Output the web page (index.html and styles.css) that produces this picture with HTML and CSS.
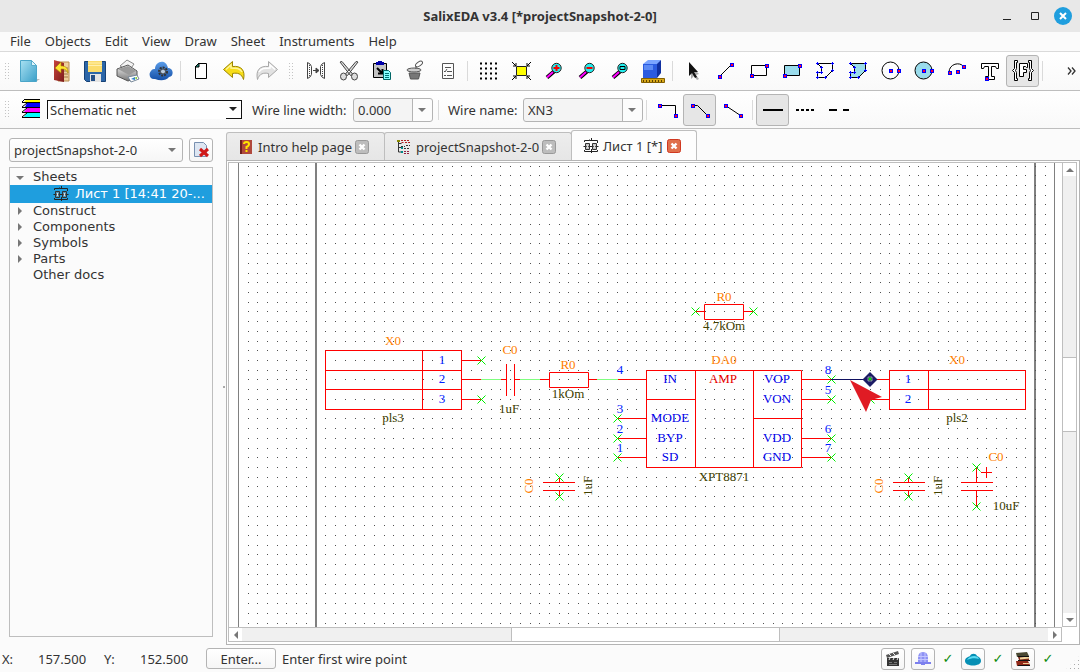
FILE: index.html
```html
<!DOCTYPE html>
<html lang="en">

<head>
  <meta charset="utf-8">
  <title>SalixEDA v3.4 [*projectSnapshot-2-0]</title>
  <meta name="viewport" content="width=device-width, initial-scale=1">
  <link rel="stylesheet" href="styles.css">
</head>

<body>
  <!-- shared icons -->
  <svg class="defs" aria-hidden="true">
    <defs>
      <linearGradient id="g-page" x1="0" y1="0" x2="1" y2="1"><stop offset="0" stop-color="#a9e1f2"/><stop offset="1" stop-color="#3a9fc8"/></linearGradient>
      <linearGradient id="g-book" x1="0" y1="0" x2="1" y2="1"><stop offset="0" stop-color="#c8443c"/><stop offset="1" stop-color="#7c1c1c"/></linearGradient>
      <linearGradient id="g-gray" x1="0" y1="0" x2="0" y2="1"><stop offset="0" stop-color="#f2f2f2"/><stop offset="1" stop-color="#777"/></linearGradient>
      <linearGradient id="g-blue" x1="0" y1="0" x2="0" y2="1"><stop offset="0" stop-color="#5a9ce8"/><stop offset="1" stop-color="#1550a8"/></linearGradient>
      <symbol id="i-sheet" viewBox="0 0 16 16">
        <path d="M1.500 4V2.500h5v-1M6.500 2.500h8V5M8.500 0v3M1.500 12v1.500h13V12M.5 8.500h15M8.500 11v4" fill="none" stroke="#222"/>
        <path d="M2.500 5.500h4v6h-4zM9.500 5.500h4v6h-4z" fill="#8a8a8a" fill-opacity=".5" stroke="#333"/>
        <path d="M4.500 7v3M11.500 7v3" stroke="#ddd"/>
      </symbol>
      <symbol id="i-close" viewBox="0 0 14 14">
        <rect x=".5" y=".5" width="13" height="13" rx="2" class="close-box"/>
        <path d="M4.500 4.500l5 5M9.500 4.500l-5 5" stroke="#fff" stroke-width="2.400"/>
      </symbol>
      <symbol id="x" viewBox="-5 -5 10 10" overflow="visible">
        <path d="M-4-4l8 8M4-4l-8 8" stroke="#0e0" fill="none"/>
      </symbol>
    </defs>
  </svg>

  <header class="titlebar">
    <h1>SalixEDA v3.4 [*projectSnapshot-2-0]</h1>
    <div class="window-buttons">
      <button type="button" aria-label="Minimize"><svg width="10" height="10"><path d="M1 8.500h8" stroke="#222"/></svg></button>
      <button type="button" aria-label="Maximize"><svg width="10" height="10"><path d="M1.500 1.500h7v7h-7z" fill="none" stroke="#222"/></svg></button>
      <button type="button" class="quit" aria-label="Close"><svg width="18" height="18"><path d="M6 6l6 6M12 6l-6 6" stroke="#fff" stroke-width="2"/></svg></button>
    </div>
  </header>

  <nav class="menubar">
    <a href="#">File</a>
    <a href="#">Objects</a>
    <a href="#">Edit</a>
    <a href="#">View</a>
    <a href="#">Draw</a>
    <a href="#">Sheet</a>
    <a href="#">Instruments</a>
    <a href="#">Help</a>
  </nav>

  <div class="toolbar" role="toolbar" aria-label="Main">
    <span class="grip"></span>
    <button type="button" class="tool" aria-label="New"><svg width="24" height="24"><path d="M6 20h17l-3 2H6z" fill="#bbb"/><path d="M3.500 1.500h11l5 5v16h-16z" fill="url(#g-page)" stroke="#4aa5c8"/><path d="M14.500 1.500v5h5z" fill="#dff4fb" stroke="#58adcc"/></svg></button>
    <button type="button" class="tool" aria-label="Open"><svg width="24" height="24"><path d="M8 3h11v19H8z" fill="#edcf9c" stroke="#b98d50"/><path d="M13 9h5M13 12h5M13 15h5M13 18h5" stroke="#a07848"/><path d="M4 1l10 3v19l-10-2z" fill="url(#g-book)"/><path d="M5 9l6-6v4c5 0 7 2 7 7-2-4-4-4-7-4v4z" fill="#ffe632" stroke="#a88800" stroke-width=".6"/></svg></button>
    <button type="button" class="tool" aria-label="Save"><svg width="24" height="24"><path d="M1.500 2.500h21v20H3.500l-2-2z" fill="#2c66a8" stroke="#174276"/><path d="M5 2h14v11H5z" fill="#fbdc6c"/><path d="M5 4h14M5 6.500h14" stroke="#fff0b0"/><path d="M7 15h11v8H7z" fill="#e4e4e4"/><path d="M8 16h4v6H8z" fill="#244f86"/></svg></button>
    <button type="button" class="tool" aria-label="Print"><svg width="24" height="24"><path d="M4 7l7-6 7 4-5 7z" fill="#f4f4f4" stroke="#888"/><path d="M1 10l11-4 9 6v7l-9 3L1 17z" fill="url(#g-gray)" stroke="#555"/><path d="M2 10l10-3 8 5-7 4z" fill="#9a9a9a"/><path d="M12 18l9-2 2 4-8 3z" fill="#fff" stroke="#789"/><path d="M15 20l4-2v3z" fill="#2a7dd0"/><path d="M18 19l3-1v2z" fill="#7ac820"/></svg></button>
    <button type="button" class="tool" aria-label="Cloud"><svg width="24" height="24"><path d="M6 20C1 21-1 15 2 12c1-2 3-2 4-2 0-8 11-11 13-1 6 0 6 9 1 9-3 4-9 4-14 2z" fill="url(#g-blue)"/><circle cx="14" cy="12.500" r="4" fill="none" stroke="#333" stroke-width="2" stroke-dasharray="2 1"/><circle cx="14" cy="12.500" r="2.500" fill="#b8cbe0" stroke="#444"/></svg></button>
    <span class="sep"></span>
    <button type="button" class="tool" aria-label="New sheet"><svg width="24" height="24"><path d="M9.500 4.500h8v15h-11v-12z" fill="#fff" stroke="#000"/><path d="M6 8l4-4v4z" fill="#1a8a7a" stroke="#000"/></svg></button>
    <button type="button" class="tool" aria-label="Undo"><svg width="24" height="24"><path d="M1.500 10.500l9-8v5c9-1 13 4 11 13-2-6-6-7-11-6v4z" fill="#f7dd18" stroke="#9b8500"/><path d="M4 10.500l5-4.500v3c5 0 9 0 11 4" fill="none" stroke="#fff59a" stroke-width="1.500"/></svg></button>
    <button type="button" class="tool" aria-label="Redo"><svg width="24" height="24"><path d="M22.500 10.500l-9-8v5c-9-1-13 4-11 13 2-6 6-7 11-6v4z" fill="#e2e2e2" stroke="#a8a8a8"/><path d="M20 10.500l-5-4.500v3c-5 0-9 0-11 4" fill="none" stroke="#fff" stroke-width="1.500"/></svg></button>
    <span class="grip"></span>
    <button type="button" class="tool" aria-label="Join"><svg width="24" height="24" fill="none" stroke="#444"><path d="M3.500 3.500q3 1 4 4v8q-1 3-4 4zM20.500 3.500q-3 1-4 4v8q1 3 4 4z"/><path d="M9 11.500h5M12 9v5l3-2.500z" fill="#444"/><path d="M5.500 6v12M18.500 6v12" stroke-dasharray="1 1"/></svg></button>
    <button type="button" class="tool" aria-label="Cut"><svg width="24" height="24" fill="#ddd" stroke="#444"><path d="M3 3l2-.5 11 13-2.500 1zM21 3l-2-.5-11 13 2.500 1z"/><ellipse cx="6.500" cy="17.500" rx="3" ry="3.500"/><ellipse cx="17.500" cy="17.500" rx="3" ry="3.500"/></svg></button>
    <button type="button" class="tool" aria-label="Paste"><svg width="24" height="24"><path d="M3.500 4.500h13v14h-13z" fill="#c4c4c4" stroke="#000"/><path d="M6 3h2V2h4v1h2v3H6z" fill="#00a"/><path d="M7 9l5 5M12.500 10v4.500H8" fill="none" stroke="#000" stroke-width="2"/><path d="M13.500 11.500h5l2 2v7h-7z" fill="#8ff" stroke="#066"/><path d="M15 14.500h4M15 16.500h4M15 18.500h4" stroke="#077"/></svg></button>
    <button type="button" class="tool" aria-label="Delete"><svg width="24" height="24" stroke="#555"><ellipse cx="11" cy="11" rx="7" ry="2" fill="#ccc"/><path d="M6 14h11l-1.500 6h-8z" fill="#777"/><ellipse cx="16" cy="5" rx="4" ry="2" fill="#fff" transform="rotate(-35 16 5)"/><path d="M13 7v3"/></svg></button>
    <button type="button" class="tool" aria-label="Properties"><svg width="24" height="24" fill="none" stroke="#555"><path d="M6.500 4.500h11v15h-11zM9 8.500h6M11 12.500h5M11 16.500h5M8 12l1 1 2-3M8 16.500h2"/></svg></button>
    <span class="sep"></span>
    <button type="button" class="tool" aria-label="Grid"><svg width="24" height="24"><path d="M4 4.500h17M4 9.500h17M4 14.500h17M4 19.500h17" stroke="#000" stroke-width="2" stroke-dasharray="2 3"/></svg></button>
    <button type="button" class="tool" aria-label="Fit"><svg width="24" height="24"><path d="M7.500 7.500h10v9h-10z" fill="#ff0" stroke="#222"/><path d="M3 3l4 4M22 3l-4 4M3 21l4-4M22 21l-4-4M7 4v3H4M18 4v3h3M7 20v-3H4M18 20v-3h3" fill="none" stroke="#000"/></svg></button>
    <button type="button" class="tool" aria-label="Zoom in"><svg width="24" height="24"><path d="M5 18.500l7-6" stroke="#000" stroke-width="4"/><path d="M5 18.500l6-5.500" stroke="#f0f" stroke-width="2"/><circle cx="14.500" cy="9" r="4.700" fill="#2ee" stroke="#222"/><path d="M11.500 9h6M14.500 6v6" stroke="#f20000" stroke-width="2"/></svg></button>
    <button type="button" class="tool" aria-label="Zoom out"><svg width="24" height="24"><path d="M5 18.500l7-6" stroke="#000" stroke-width="4"/><path d="M5 18.500l6-5.500" stroke="#f0f" stroke-width="2"/><circle cx="14.500" cy="9" r="4.700" fill="#2ee" stroke="#222"/><path d="M11.500 9h6" stroke="#f20000" stroke-width="2"/></svg></button>
    <button type="button" class="tool" aria-label="Zoom window"><svg width="24" height="24"><path d="M5 18.500l7-6" stroke="#000" stroke-width="4"/><path d="M5 18.500l6-5.500" stroke="#f0f" stroke-width="2"/><circle cx="14.500" cy="9" r="4.700" fill="#2ee" stroke="#222"/><path d="M12 7.500h5v3h-5z" fill="none" stroke="#000"/></svg></button>
    <button type="button" class="tool" aria-label="3D view"><svg width="24" height="24"><path d="M2 5l5-4h13l-3 4z" fill="#7aa4ff"/><path d="M2 5h14v14H2z" fill="#2b5be0"/><path d="M3 6h9v5H3z" fill="#5c8af4"/><path d="M16 5l4-4v13l-4 5z" fill="#1030a0"/><path d="M.5 19.500h23v4H.5z" fill="#d8a818" stroke="#846000"/><path d="M2.500 21v2M5.500 21v2M8.500 21v2M11.500 21v2M14.500 21v2M17.500 21v2M20.500 21v2" stroke="#5c4200"/></svg></button>
    <span class="sep"></span>
    <button type="button" class="tool" aria-label="Select"><svg width="24" height="24"><path d="M10 7l8 8-3 1 3 4-2 1-3-4-3 3z" fill="#aaa"/><path d="M8 3l9 10h-4l3 5-2 1-3-5-3 3z" fill="#111"/></svg></button>
    <button type="button" class="tool" aria-label="Line"><svg width="24" height="24"><path d="M5.500 17.500l12-12" stroke="#000"/><path d="M4 16h3v3H4zM16 4h3v3h-3z" class="node"/></svg></button>
    <button type="button" class="tool" aria-label="Rectangle"><svg width="24" height="24"><path d="M4.500 6.500h15v10h-15z" fill="none" stroke="#000"/><path d="M3 15h3v3H3zM18 5h3v3h-3z" class="node"/></svg></button>
    <button type="button" class="tool" aria-label="Filled rectangle"><svg width="24" height="24"><path d="M4.500 6.500h15v10h-15z" fill="#9adcec" stroke="#000"/><path d="M3 15h3v3H3zM18 5h3v3h-3z" class="node"/></svg></button>
    <button type="button" class="tool" aria-label="Polygon"><svg width="24" height="24"><path d="M4.500 4.500h15v7l-7 7h-8v-5h4v-5z" fill="none" stroke="#000"/><path d="M3 4.500h3M18 4.500h3M18 11.500h3M11 18.500h3M3 18.500h3M3 13.500h3M7 13.500h3M7 8.500h3M4.500 3v3M19.500 3v3M19.500 10v3M12.500 17v3M4.500 17v3M4.500 12v3M8.500 12v3M8.500 7v3" class="vertex"/></svg></button>
    <button type="button" class="tool" aria-label="Filled polygon"><svg width="24" height="24"><path d="M4.500 4.500h15v7l-7 7h-8v-5h4v-5z" fill="#9adcec" stroke="#000"/><path d="M3 4.500h3M18 4.500h3M18 11.500h3M11 18.500h3M3 18.500h3M3 13.500h3M7 13.500h3M7 8.500h3M4.500 3v3M19.500 3v3M19.500 10v3M12.500 17v3M4.500 17v3M4.500 12v3M8.500 12v3M8.500 7v3" class="vertex"/></svg></button>
    <button type="button" class="tool" aria-label="Circle"><svg width="24" height="24"><circle cx="11.500" cy="11.500" r="8.500" fill="none" stroke="#000"/><path d="M10 10h3v3h-3zM18 10h3v3h-3z" class="node"/></svg></button>
    <button type="button" class="tool" aria-label="Filled circle"><svg width="24" height="24"><circle cx="11.500" cy="11.500" r="8.500" fill="#9adcec" stroke="#000"/><path d="M10 10h3v3h-3zM18 10h3v3h-3z" class="node"/></svg></button>
    <button type="button" class="tool" aria-label="Arc"><svg width="24" height="24"><path d="M4 13.500c0-9 11-11 14.500-6" fill="none" stroke="#000"/><path d="M3 12h3v3H3zM11 11h3v3h-3zM17 6h3v3h-3z" class="node"/></svg></button>
    <button type="button" class="tool" aria-label="Text"><svg width="24" height="24"><path d="M3.500 4.500h17v5h-2l-1-2h-4v10h3v3h-9v-3h3v-10h-4l-1 2h-2z" fill="#fff" stroke="#000"/><path d="M7 18h3v3H7z" class="node"/></svg></button>
    <button type="button" class="tool checked" aria-label="Text frame" aria-pressed="true"><svg width="24" height="24" fill="#fff" stroke="#000"><path d="M6.500 1.500h-3v8l-2 2 2 2v8h3v-2h-1v-6l-1-2 1-2v-6h1zM17.500 1.500h3v8l2 2-2 2v8h-3v-2h1v-6l1-2-1-2v-6h-1z"/><path d="M8.500 4.500h8v4h-1l-1-1h-2v3h3v3h-3v4h-4z"/></svg></button>
    <span class="sep"></span>
    <button type="button" class="more" aria-label="More tools"><svg width="9" height="8"><path d="M1 0.500l3 3.500-3 3.500M5 0.500L8 4 5 7.500" fill="none" stroke="#333" stroke-width="1.300"/></svg></button>
  </div>

  <div class="toolbar wire-bar" role="toolbar" aria-label="Wire">
    <span class="grip"></span>
    <span class="layer-icon"><svg width="18" height="19"><path d="M4 1h14v2H2z" fill="#ff0"/><path d="M5 4h13v4H3z" fill="#00f"/><path d="M5 9h13v4H2z" fill="#f0f"/><path d="M5 14h13v4H2z" fill="#0ff"/><path d="M2 .5h16M0 3.500h18M0 8.500h18M0 13.500h18M0 18.500h18M0 3l3-3M0 8l5-4M0 13l5-4M0 18l5-4" stroke="#000"/></svg></span>
    <span class="combo classic"><select aria-label="Layer"><option>Schematic net</option></select></span>
    <label for="wire-width" class="first-label">Wire line width:</label>
    <span class="combo split width-combo"><select id="wire-width"><option>0.000</option></select></span>
    <span class="sep wide"></span>
    <label for="wire-name">Wire name:</label>
    <span class="combo split name-combo"><select id="wire-name"><option>XN3</option></select></span>
    <span class="sep"></span>
    <button type="button" class="tool" aria-label="Orthogonal wire"><svg width="24" height="24"><path d="M4.500 7.500h16v10" fill="none" stroke="#000"/><path d="M3 6h3v3H3zM19 16h3v3h-3z" class="node"/></svg></button>
    <button type="button" class="tool checked" aria-label="Bevelled wire" aria-pressed="true"><svg width="24" height="24"><path d="M4.500 7.500h5l10 10" fill="none" stroke="#000"/><path d="M3 6h3v3H3zM18 16h3v3h-3z" class="node"/></svg></button>
    <button type="button" class="tool" aria-label="Straight wire"><svg width="24" height="24"><path d="M4.500 7.500l15 10" fill="none" stroke="#000"/><path d="M3 6h3v3H3zM18 16h3v3h-3z" class="node"/></svg></button>
    <span class="sep"></span>
    <button type="button" class="tool checked" aria-label="Solid line" aria-pressed="true"><svg width="24" height="24"><path d="M2 12h20" stroke="#000" stroke-width="2"/></svg></button>
    <button type="button" class="tool" aria-label="Dotted line"><svg width="24" height="24"><path d="M2 12h20" stroke="#000" stroke-width="2" stroke-dasharray="3 2"/></svg></button>
    <button type="button" class="tool" aria-label="Dashed line"><svg width="24" height="24"><path d="M2 12h20" stroke="#000" stroke-width="2" stroke-dasharray="8 6"/></svg></button>
  </div>

  <main class="workspace">
    <aside class="sidebar">
      <div class="project">
        <span class="combo"><select aria-label="Project"><option>projectSnapshot-2-0</option></select></span>
        <button type="button" class="close-project" aria-label="Close project"><svg width="16" height="16"><path d="M1.500.5h9l3 3v11h-12z" fill="#dde6f2" stroke="#7890b0"/><path d="M7 7l8 7M15 7l-8 7" stroke="#d01818" stroke-width="3"/></svg></button>
      </div>
      <ul class="tree">
        <li class="open">Sheets</li>
        <li class="selected"><svg width="16" height="16"><use href="#i-sheet"/></svg><span>Лист 1 [14:41 20-...</span></li>
        <li class="closed">Construct</li>
        <li class="closed">Components</li>
        <li class="closed">Symbols</li>
        <li class="closed">Parts</li>
        <li>Other docs</li>
      </ul>
    </aside>

    <section class="editor">
      <div class="tabs">
        <div class="tab help">
          <svg width="16" height="16"><path d="M3 1h11v14H3z" fill="#b0483c"/><path d="M2 1h2v14H2z" fill="#6d201c"/><path d="M6 5q0-2 2.500-2T11 5q0 2-2.500 3v2M8.500 11v2" fill="none" stroke="#ffe600" stroke-width="2"/></svg>
          <span>Intro help page</span>
          <button type="button" aria-label="Close tab"><svg width="14" height="14"><use href="#i-close"/></svg></button>
        </div>
        <div class="tab proj">
          <svg width="16" height="16" fill="none"><path d="M2.500 2v11h3M2.500 8.500h3M2.500 4.500h3" stroke="#333"/><path d="M1 1h3v2H1z" fill="#880"/><path d="M5 1.500h9M5.500 3.500h2M9 3.500h2M12 3.500h2" stroke="#b02020" stroke-dasharray="2 1"/><path d="M5 7.500h4M8 9.500h6M10 6.500h4" stroke="#333" stroke-dasharray="2 1"/><path d="M5 8h2v2H5zM5 12h2v2H5z" fill="#088"/><path d="M8 12.500h6M8 14.500h6" stroke="#902040" stroke-dasharray="2 1"/></svg>
          <span>projectSnapshot-2-0</span>
          <button type="button" aria-label="Close tab"><svg width="14" height="14"><use href="#i-close"/></svg></button>
        </div>
        <div class="tab current">
          <svg width="16" height="16"><use href="#i-sheet"/></svg>
          <span>Лист 1 [*]</span>
          <button type="button" aria-label="Close tab"><svg width="14" height="14"><use href="#i-close"/></svg></button>
        </div>
      </div>

      <div class="frame">
        <div class="canvas">
          <svg class="schematic" viewBox="229 163 833 464" width="833" height="464">
            <!-- sheet border -->
            <path d="M238.500 163v464M1054.500 163v464" stroke="#808080"/>
            <path d="M316 163v464M1035 163v464" stroke="#808080" stroke-width="2"/>
            <path id="grid" fill="#505050"/>

            <g class="wires" stroke="#80ff80">
              <path d="M481 379.500h20M520 379.500h20M597 379.500h21"/>
            </g>
            <g class="parts">
              <path d="M325.500 350.500h136v59h-136zM422.500 350v59M325 370.500h136M325 389.500h136M461 360.500h20M461 379.500h20M461 399.500h20"/>
              <path d="M501 379.500h5M506.500 364v32M514.500 364v32M514 379.500h6"/>
              <path d="M540 379.500h9M549.500 372.500h39v15h-39zM589 379.500h8"/>
              <path d="M695 311.500h9M704.500 304.500h39v15h-39zM744 311.500h9"/>
              <path d="M646.500 370.500h155v97h-155zM695.500 370v97M753.500 370v97M646 399.500h49M753 418.500h48"/>
              <path d="M618 379.500h28M618 418.500h28M618 438.500h28M618 457.500h28M801 379.500h30M801 399.500h30M801 438.500h30M801 457.500h30"/>
              <path d="M889.500 370.500h136v39h-136zM928.500 370v39M889 389.500h136M877 379.500h12M870 399.500h19"/>
              <path d="M543 482.500h32M543 490.500h32M559.500 477v5M559.500 491v5"/>
              <path d="M893 482.500h32M893 490.500h32M908.500 477v5M908.500 491v5"/>
              <path d="M961 482.500h32M961 490.500h32M976.500 467v15M976.500 491v15M986.500 467v11M981 472.500h11"/>
            </g>
            <g class="pins">
              <use href="#x" x="476.500" y="355.500" width="10" height="10"/>
              <use href="#x" x="476.500" y="394.500" width="10" height="10"/>
              <use href="#x" x="690.500" y="306.500" width="10" height="10"/>
              <use href="#x" x="748.500" y="306.500" width="10" height="10"/>
              <use href="#x" x="612.500" y="413.500" width="10" height="10"/>
              <use href="#x" x="612.500" y="433.500" width="10" height="10"/>
              <use href="#x" x="612.500" y="452.500" width="10" height="10"/>
              <use href="#x" x="826.500" y="374.500" width="10" height="10"/>
              <use href="#x" x="826.500" y="394.500" width="10" height="10"/>
              <use href="#x" x="826.500" y="433.500" width="10" height="10"/>
              <use href="#x" x="826.500" y="452.500" width="10" height="10"/>
              <use href="#x" x="865.500" y="394.500" width="10" height="10"/>
              <use href="#x" x="554.500" y="472.500" width="10" height="10"/>
              <use href="#x" x="554.500" y="491.500" width="10" height="10"/>
              <use href="#x" x="903.500" y="472.500" width="10" height="10"/>
              <use href="#x" x="903.500" y="491.500" width="10" height="10"/>
              <use href="#x" x="971.500" y="462.500" width="10" height="10"/>
              <use href="#x" x="971.500" y="501.500" width="10" height="10"/>
            </g>

            <!-- reference names -->
            <g fill="#ff8000">
              <text x="393" y="345">X0</text>
              <text x="510" y="354">C0</text>
              <text x="568" y="369">R0</text>
              <text x="724" y="301">R0</text>
              <text x="724" y="364">DA0</text>
              <text x="957" y="364">X0</text>
              <text x="996" y="461">C0</text>
              <text transform="translate(533 486) rotate(-90)">C0</text>
              <text transform="translate(883 486) rotate(-90)">C0</text>
            </g>
            <!-- values -->
            <g fill="#404000">
              <text x="393" y="422">pls3</text>
              <text x="509" y="413">1uF</text>
              <text x="568" y="398">1kOm</text>
              <text x="724" y="330">4.7kOm</text>
              <text x="724" y="481">XPT8871</text>
              <text x="957" y="422">pls2</text>
              <text x="1006" y="510">10uF</text>
              <text transform="translate(592 486) rotate(-90)">1uF</text>
              <text transform="translate(942 486) rotate(-90)">1uF</text>
            </g>
            <!-- pin numbers -->
            <g fill="#0020ff">
              <text x="442" y="364">1</text>
              <text x="442" y="383">2</text>
              <text x="442" y="403">3</text>
              <text x="620" y="374">4</text>
              <text x="620" y="413">3</text>
              <text x="620" y="433">2</text>
              <text x="620" y="452">1</text>
              <text x="828" y="374">8</text>
              <text x="828" y="394">5</text>
              <text x="828" y="433">6</text>
              <text x="828" y="452">7</text>
              <text x="908" y="383">1</text>
              <text x="908" y="403">2</text>
            </g>
            <!-- pin names -->
            <g fill="#0000e8">
              <text x="670" y="383">IN</text>
              <text x="670" y="422">MODE</text>
              <text x="670" y="442">BYP</text>
              <text x="670" y="461">SD</text>
              <text x="777" y="383">VOP</text>
              <text x="777" y="403">VON</text>
              <text x="777" y="442">VDD</text>
              <text x="777" y="461">GND</text>
            </g>
            <text x="723" y="383" fill="#e80000">AMP</text>

            <!-- wire being drawn, snap mark and pointer -->
            <path d="M831 379.500h39" stroke="#101060"/>
            <path d="M870 372l7.500 7.500-7.500 7.500-7.500-7.500z" fill="#1c1c64"/>
            <path d="M868 377h4v4h-4z" fill="#0a4a2a" stroke="#fff" stroke-width=".5"/>
            <path d="M869 378h2v2h-2z" fill="#0e0"/>
            <path d="M850 380l32 17-11 3-5 12z" fill="#e01b24"/>
          </svg>
        </div>
        <div class="scroll vertical"><i class="arrow up"></i><span class="track"><b></b></span><i class="arrow down"></i></div>
        <div class="scroll horizontal"><i class="arrow left"></i><span class="track"><b></b></span><i class="arrow right"></i></div>
      </div>
    </section>
  </main>

  <footer class="statusbar">
    <span class="axis">X:</span>
    <output class="coord">157.500</output>
    <span class="axis">Y:</span>
    <output class="coord">152.500</output>
    <button type="button" class="enter">Enter...</button>
    <span class="hint">Enter first wire point</span>
    <div class="indicators">
      <button type="button" aria-label="Record"><svg width="16" height="16"><path d="M2 7h12v8H2z" fill="#333"/><path d="M1 4l12-4 1 3L2 7z" fill="#555"/><path d="M4 3l2 2M8 2l2 2M5 7L4 9M9 7L8 9M13 7l-1 2" stroke="#eee"/><path d="M4 11.500h3M9 11.500h3M4 13.500h8" stroke="#777"/></svg></button>
      <button type="button" aria-label="Server"><svg width="16" height="16"><path d="M3 11V7q0-6 5-6t5 6v4z" fill="#8e92f4"/><path d="M3 5.500h10M3 8.500h10M6 2v9M10 2v9" stroke="#c4c6ff"/><path d="M0 11h16v2H0z" fill="#7c80ee"/><path d="M6 13h4v1H6z" fill="#7c80ee"/></svg></button>
      <span class="ok">✓</span>
      <button type="button" aria-label="Cloud"><svg width="16" height="16"><path d="M0 10c0-3 3-4 5-5 1-3 6-3 7 0 3 1 4 3 4 5 0 6-16 6-16 0z" fill="#068fb4"/><path d="M2 9c2-4 10-6 12-1-3-1-8-1-12 1z" fill="#5cdcf4"/></svg></button>
      <span class="ok">✓</span>
      <button type="button" aria-label="Library"><svg width="16" height="16"><path d="M1 2l11-1 2 4-12 1z" fill="#4c4a34"/><path d="M3 6l11-1v4L4 9z" fill="#7c2c1c"/><path d="M5 7.500l9-1" stroke="#f4d8a0" stroke-width="2"/><path d="M1 10h12l2 4-13 1z" fill="#902818"/><path d="M3 5.500h11M3 9.500h12M3 14.500h12" stroke="#111"/><path d="M8 12.500h6" stroke="#f0ca90"/></svg></button>
      <span class="ok">✓</span>
      <span class="size-grip"></span>
    </div>
  </footer>

  <script>
    // grid dots, snapped to whole pixels
    (() => {
      const step = 175 / 18;
      let d = '';
      for (let j = 0; j < 48; j++) {
        for (let i = 0; i < 83; i++) {
          const x = Math.round(247.6 + i * step);
          const y = Math.round(165.6 + j * step);
          if (i === 7) continue; // under the inner border
          d += `M${x} ${y}h1v1h-1z`;
        }
      }
      document.querySelector('#grid').setAttribute('d', d);
    })();
  </script>
</body>

</html>
```
FILE: styles.css
```css
* { box-sizing: border-box; margin: 0; padding: 0; }
html { height: 100%; }
body {
  display: flex;
  flex-direction: column;
  min-height: 100%;
  font: 13px/16px "Noto Sans", "Open Sans", sans-serif;
  color: #333;
  background: #fbfbfb;
}
svg { display: block; }
button { font: inherit; color: inherit; border: 0; background: none; }
select { font: inherit; color: inherit; }
.defs { position: absolute; width: 0; height: 0; }

/* title and menu */
.titlebar {
  display: grid;
  grid-template-columns: 1fr auto 1fr;
  align-items: center;
  height: 32px;
  background: #e8e8e8;
}
.titlebar h1 {
  grid-column: 2;
  font-size: 13px;
  font-weight: bold;
}
.window-buttons {
  display: flex;
  justify-content: flex-end;
  align-items: center;
  gap: 18px;
  padding-right: 8px;
}
.window-buttons .quit {
  margin-left: -4px;
  border-radius: 50%;
  background: #1f9ede;
}
.menubar {
  display: flex;
  gap: 14px;
  height: 20px;
  padding: 1px 10px 0;
  border-bottom: 1px solid #dadada;
}
.menubar a { color: #333; text-decoration: none; }

/* toolbars */
.toolbar {
  display: flex;
  align-items: center;
  height: 39px;
  border-bottom: 1px solid #bebebe;
  background: linear-gradient(#fff, #f9f9f9);
}
.wire-bar { height: 38px; }
.grip {
  flex: none;
  width: 16px;
  height: 17px;
  padding: 0 4px 0 6px;
  background: linear-gradient(#c8c8c8, #c8c8c8) 0 0 / 1px 1px;
  background: conic-gradient(from 270deg at 1px 1px, #c4c4c4 25%, transparent 0) 0 0 / 3px 3px content-box;
}
.grip:first-child { width: 12px; padding: 0 3px 0 5px; }
.tool {
  display: flex;
  flex: none;
  align-items: center;
  justify-content: center;
  width: 33px;
  height: 32px;
  border: 1px solid transparent;
  border-radius: 3px;
}
.tool.checked { border-color: #b4b4b4; background: #e6e6e6; }
.sep {
  flex: none;
  width: 7px;
  height: 20px;
  background: linear-gradient(#dadada, #dadada) center / 1px 100% no-repeat;
}
.sep.wide { width: 11px; }
.more { margin-left: auto; padding-right: 4px; }
.node { fill: #f03; stroke: #00f; shape-rendering: crispEdges; }
.vertex { stroke: #00f; }
.layer-icon { margin: 0 7px 3px 10px; }
.toolbar .first-label { margin-left: 10px; }
.toolbar label { width: 93px; white-space: nowrap; }
.toolbar label[for="wire-name"] { width: 67px; margin-left: 4px; }
.width-combo { width: 80px; margin-left: 8px; }
.name-combo { width: 120px; margin-left: 8px; }

/* drop-downs */
.combo {
  position: relative;
  display: flex;
  flex: none;
  height: 24px;
}
.combo select {
  width: 100%;
  padding: 0 20px 0 4px;
  border: 1px solid #b4b4b4;
  border-radius: 3px;
  background: linear-gradient(#fff, #f6f6f6);
  appearance: none;
}
.combo::after {
  content: "";
  position: absolute;
  right: 7px;
  top: 10px;
  border: 4px solid transparent;
  border-top-color: #777;
  border-bottom: 0;
  pointer-events: none;
}
.split select {
  background: linear-gradient(#b4b4b4, #b4b4b4) right 19px top / 1px 100% no-repeat, linear-gradient(to left, #fcfcfc 19px, #f4f4f4 19px);
}
.classic { width: 195px; height: 19px; }
.classic select {
  padding-left: 2px;
  border: 0;
  border-top: 1px solid #111;
  border-left: 1px solid #111;
  border-radius: 0;
  background: linear-gradient(#111, #111) right bottom / 16px 1px no-repeat, linear-gradient(#111, #111) right / 1px 100% no-repeat, #fff;
}
.classic::after { right: 5px; top: 7px; border-top-color: #222; }

/* sidebar */
.workspace { display: flex; flex: 1; min-height: 0; }
.sidebar {
  display: flex;
  flex: none;
  flex-direction: column;
  gap: 5px;
  width: 226px;
  padding: 9px 13px 8px 9px;
  background: radial-gradient(circle, #aaa 1px, transparent 1px) right center / 4px 4px no-repeat;
}
.project { display: flex; gap: 6px; }
.project .combo { flex: 1; }
.close-project, .enter, .indicators button {
  border: 1px solid #b4b4b4;
  border-radius: 3px;
  background: linear-gradient(#fff, #f6f6f6);
}
.close-project {
  display: flex;
  align-items: center;
  justify-content: center;
  width: 24px;
}
.tree {
  flex: 1;
  padding-top: 1px;
  border: 1px solid #bebebe;
  list-style: none;
  font: 13px/16px "DejaVu Sans", sans-serif;
}
.tree li { position: relative; padding-left: 23px; }
.tree .selected {
  display: flex;
  align-items: center;
  gap: 6px;
  height: 18px;
  padding-left: 43px;
  color: #fff;
  background: #1f9ede;
}
.tree .selected svg { flex: none; }
.tree .selected span { white-space: nowrap; }
.open::before, .closed::before {
  content: "";
  position: absolute;
  left: 6px;
  top: 7px;
  border: 4px solid transparent;
  border-top-color: #777;
  border-bottom: 0;
}
.closed::before {
  left: 8px;
  top: 4px;
  border: 4px solid transparent;
  border-left-color: #777;
  border-right: 0;
}

/* document tabs */
.editor { display: flex; flex: 1; flex-direction: column; min-width: 0; }
.tabs { display: flex; align-items: flex-end; height: 31px; }
.tab {
  display: flex;
  align-items: center;
  height: 28px;
  padding: 0 15px 0 11px;
  border: 1px solid #bebebe;
  border-bottom: 0;
  border-radius: 3px 3px 0 0;
  color: #333;
  background: linear-gradient(#ededed, #e6e6e6);
}
.tab > svg { margin-right: 4px; }
.tab span { flex: 1; white-space: nowrap; }
.close-box { fill: var(--box, #bdbdbd); stroke: var(--edge, #999); }
.help { width: 159px; }
.proj { width: 188px; margin-left: -1px; }
.current {
  --box: #e0704c;
  --edge: #d03820;
  width: 126px;
  height: 30px;
  margin-left: -1px;
  background: #fdfdfd;
}

/* drawing area */
.frame {
  display: grid;
  flex: 1;
  grid-template-columns: 1fr 15px;
  grid-template-rows: 1fr 15px;
  padding: 1px 2px 2px 1px;
  border: 1px solid #b4b4b4;
  background: #fff;
}
.canvas { min-width: 0; overflow: hidden; border: 1px solid #bebebe; border-width: 1px 0 0 1px; }
.schematic text {
  font: 13px "Liberation Serif", serif;
  text-anchor: middle;
}
.parts { fill: none; stroke: #f00; }
.scroll { display: flex; border: 1px solid #bebebe; background: #fff; }
.vertical { flex-direction: column; }
.track { display: flex; flex: 1; background: #f0f0f0; }
.vertical .track { flex-direction: column; }
.track::before { content: ""; flex: 270; }
.track b { flex: 269; border: solid #bebebe; border-width: 0 1px; background: #fff; }
.track::after { content: ""; flex: 269; }
.vertical .track::before { flex: 182; }
.vertical .track b { flex: 73; border-width: 1px 0; }
.vertical .track::after { flex: 182; }
.arrow {
  display: flex;
  align-items: center;
  justify-content: center;
  width: 13px;
  height: 13px;
}
.arrow::before { content: ""; border: 4px solid transparent; }
.up::before { border-bottom-color: #777; border-top: 0; }
.down::before { border-top-color: #777; border-bottom: 0; }
.left::before { border-right-color: #777; border-left: 0; }
.right::before { border-left-color: #777; border-right: 0; }

/* status bar */
.statusbar {
  display: flex;
  align-items: center;
  height: 29px;
  padding: 0 0 2px 2px;
}
.axis { width: 22px; }
.coord { width: 80px; padding-left: 14px; }
.enter { width: 70px; height: 21px; line-height: 18px; }
.hint { margin-left: 6px; }
.indicators { display: flex; align-items: center; gap: 6px; margin-left: auto; }
.indicators button {
  display: flex;
  align-items: center;
  justify-content: center;
  width: 24px;
  height: 22px;
}
.ok {
  width: 14px;
  color: #0a8a0a;
  font: 13px/16px "DejaVu Sans", sans-serif;
  text-align: center;
}
.size-grip {
  width: 14px;
  height: 14px;
  margin-left: 5px;
  align-self: flex-end;
  background: conic-gradient(from 270deg at 1px 1px, #aaa 25%, transparent 0) 0 0 / 4px 4px;
  clip-path: polygon(100% 0, 100% 100%, 0 100%);
}
```
